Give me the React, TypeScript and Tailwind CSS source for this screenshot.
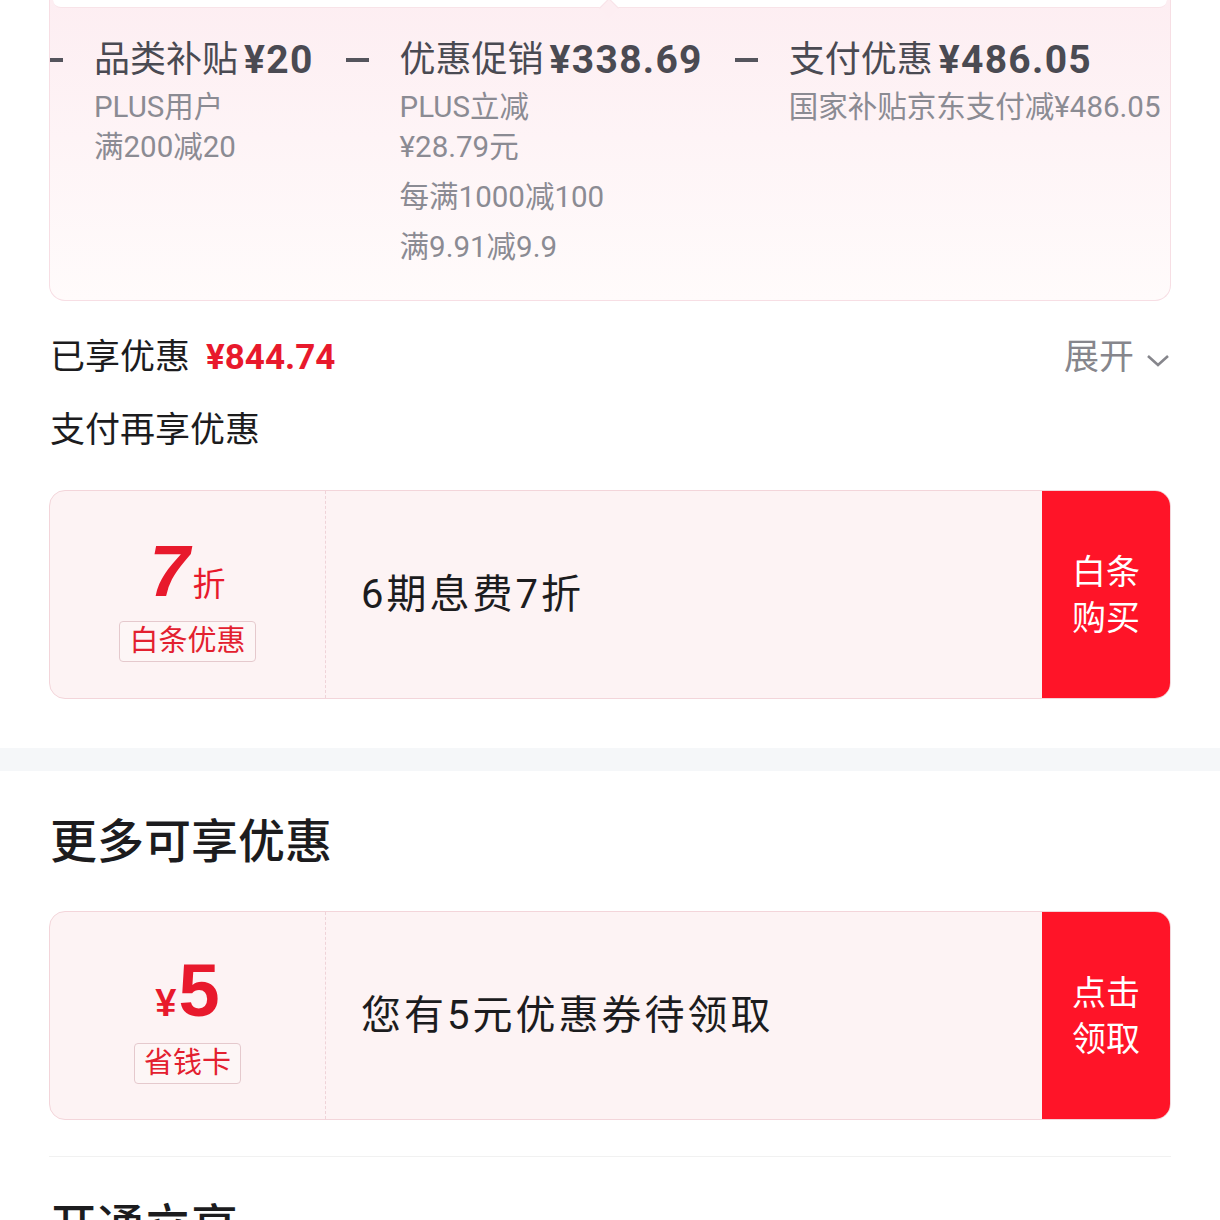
import React from "react";

const sans = "font-['Roboto','Noto_Sans_CJK_SC',sans-serif]";

const summary = [
  { title: "品类补贴", amount: "¥20", lines: [["PLUS用户", "满200减20"]] },
  {
    title: "优惠促销",
    amount: "¥338.69",
    lines: [["PLUS立减", "¥28.79元"], ["每满1000减100"], ["满9.91减9.9"]],
  },
  { title: "支付优惠", amount: "¥486.05", lines: [["国家补贴京东支付减¥486.05"]] },
];

function SummaryItem({ item }) {
  return (
    <div className="flex shrink-0 mr-[32px]">
      <div className="flex h-[44px] items-center">
        <div className="h-[4px] w-[23px] bg-[#55555d]" />
      </div>
      <div className="ml-[31px]">
        <div className="flex h-[44px] items-center whitespace-nowrap text-[36px] text-[#4a4a52]">
          <span>{item.title}</span>
          <span className="ml-[6px] text-[39px] font-bold tracking-[1.3px]">{item.amount}</span>
        </div>
        <div className="mt-[5px] flex flex-col gap-y-[10px]">
          {item.lines.map((l, i) => (
            <div key={i} className="whitespace-nowrap text-[29.5px] leading-[40px] text-[#8b8b93]">
              {l.map((t, j) => (
                <div key={j}>{t}</div>
              ))}
            </div>
          ))}
        </div>
      </div>
    </div>
  );
}

function CouponCard({ left, text, action }) {
  return (
    <div className="mx-[49px] flex h-[209px] overflow-hidden rounded-[16px] border border-[#f3d5da] bg-[#fdf3f4]">
      <div className="flex w-[276px] flex-col items-center justify-center border-r border-dashed border-[#efd3d8] pt-[10px]">
        {left}
      </div>
      <div className="flex flex-1 items-center pl-[35px] text-[40px] tracking-[3px] text-[#1c1c1e]">
        {text}
      </div>
      <div className="flex w-[128px] items-center justify-center bg-[#ff1428] text-center text-[34px] leading-[46px] text-white">
        <div>
          {action[0]}
          <br />
          {action[1]}
        </div>
      </div>
    </div>
  );
}

function Tag({ children }) {
  return (
    <div className="mt-[11px] rounded-[4px] border border-[#e5c9cd] bg-[#fdf6f6] px-[9px] text-[29px] leading-[39px] text-[#e3202f]">
      {children}
    </div>
  );
}

export default function App() {
  return (
    <div className={`w-[1220px] bg-white pb-[40px] ${sans}`}>
      <div className="mx-[49px] h-[301px] overflow-hidden rounded-b-[16px] border border-t-0 border-[#f7dee4] bg-gradient-to-b from-[#fdeef2] to-[#fffbfb]">
        <div className="relative mx-[3px] h-[8px] rounded-b-[14px] border-b border-[#f8e3e8] bg-white">
          <div className="absolute bottom-[-8px] left-[549px] h-[14px] w-[14px] rotate-45 border-l border-t border-[#f8e3e8] bg-[#fdeef2]" />
        </div>
        <div className="mt-[30px] flex -ml-[10px]">
          {summary.map((it) => (
            <SummaryItem key={it.title} item={it} />
          ))}
        </div>
      </div>

      <div className="mt-[35px] flex h-[44px] items-center justify-between px-[50px]">
        <div className="flex items-center text-[35px] text-[#1c1c1e]">
          <span>已享优惠</span>
          <span className="ml-[16px] font-bold text-[#e8192c]">¥844.74</span>
        </div>
        <div className="flex items-center text-[35px] text-[#86868c]">
          <span>展开</span>
          <svg width="24" height="14" viewBox="0 0 24 14" className="ml-[12px] mt-[6px]">
            <path d="M2 2l10 9 10-9" fill="none" stroke="#86868c" strokeWidth="2.6" />
          </svg>
        </div>
      </div>

      <div className="mt-[29px] px-[50px] text-[35px] leading-[44px] text-[#1c1c1e]">支付再享优惠</div>

      <div className="mt-[37px]">
        <CouponCard
          left={
            <>
              <div className="flex items-baseline text-[#e8192c]">
                <span className="text-[72px] leading-[68px] font-bold italic font-['Liberation_Sans',sans-serif] tracking-[-3px]">7</span>
                <span className="ml-[6px] text-[33px]">折</span>
              </div>
              <Tag>白条优惠</Tag>
            </>
          }
          text="6期息费7折"
          action={["白条", "购买"]}
        />
      </div>

      <div className="mt-[49px] h-[23px] bg-[#f5f7f9]" />

      <div className="mt-[43px] px-[50px] text-[47px] leading-[56px] font-medium text-[#1c1c1e]">更多可享优惠</div>

      <div className="mt-[41px]">
        <CouponCard
          left={
            <>
              <div className="flex items-baseline text-[#e8192c] font-['Liberation_Sans',sans-serif] font-bold">
                <span className="text-[38px]">¥</span>
                <span className="ml-[2px] text-[74px] leading-[66px]">5</span>
              </div>
              <Tag>省钱卡</Tag>
            </>
          }
          text="您有5元优惠券待领取"
          action={["点击", "领取"]}
        />
      </div>

      <div className="mx-[49px] mt-[36px] h-px bg-[#f1f1f1]" />

      <div className="mt-[42px] px-[50px] text-[47px] leading-[56px] font-medium text-[#1c1c1e]">开通立享</div>
    </div>
  );
}
